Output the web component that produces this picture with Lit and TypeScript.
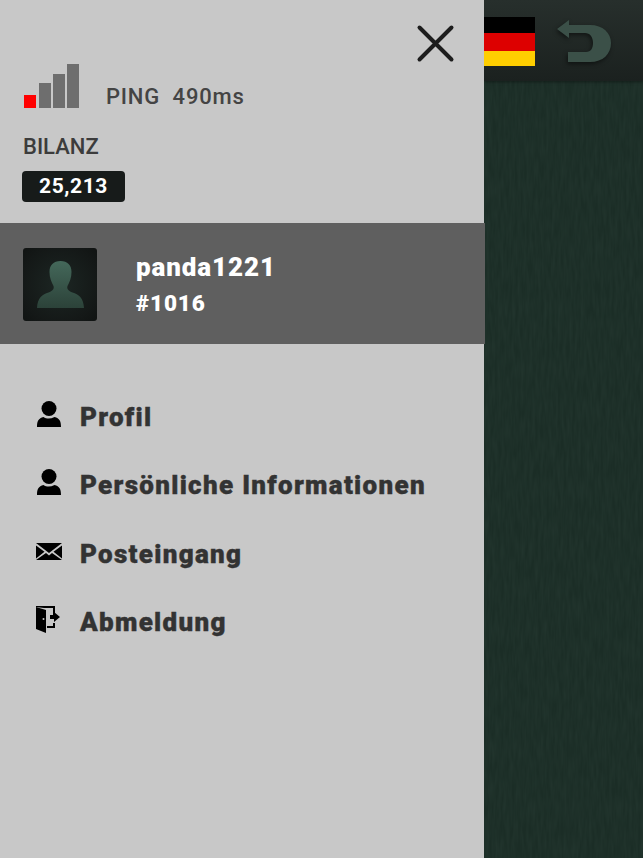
import { LitElement, html, css, svg } from 'lit';
import { customElement } from 'lit/decorators.js';

const personIcon = svg`<svg class="ico" width="27" height="28" viewBox="0 0 27 28"><circle cx="14" cy="8.5" r="7.5" fill="#000"/><path d="M2 27c0-6 1.500-8.500 6.500-10 3 2 7 2 11 0 5 1.500 6.500 4 6.500 10z" fill="#000"/></svg>`;
const mailIcon = svg`<svg class="ico" width="28" height="20" viewBox="0 0 28 20"><path d="M1 2h26L14 12z M1 4.500v13l8.500-6.800z M27 4.500v13l-8.500-6.800z M1 19l10-7 3 2.500 3-2.500 10 7z" fill="#000"/></svg>`;
const doorIcon = svg`<svg class="ico" width="26" height="28" viewBox="0 0 26 28"><path d="M1 1h19v11h-2V3H9L1 2z" fill="#000"/><path d="M1 2l10 3v23L1 24z" fill="#000"/><path d="M12 23h8v-5h-2v3h-6z" fill="#000"/><path d="M15 10h4V7l6 5-6 5v-3h-4z" fill="#000"/><circle cx="8.500" cy="14" r="1" fill="#c8c8c8"/></svg>`;

const menu = [
  { icon: personIcon, label: 'Profil' },
  { icon: personIcon, label: 'Persönliche Informationen' },
  { icon: mailIcon, label: 'Posteingang' },
  { icon: doorIcon, label: 'Abmeldung' },
];

const bars = [13, 25, 34, 44];

@customElement('app-root')
export class AppRoot extends LitElement {
  static styles = css`
    :host {
      display: block;
      width: 643px;
      height: 858px;
      overflow: hidden;
      font-family: Roboto, "Liberation Sans", sans-serif;
    }
    .page {
      display: flex;
      width: 100%;
      height: 100%;
    }
    .drawer {
      flex: 0 0 484px;
      min-width: 0;
      background: #c8c8c8;
      display: flex;
      flex-direction: column;
      position: relative;
      z-index: 1;
    }
    .close {
      position: absolute;
      left: 416px;
      top: 24px;
      filter: blur(0.5px);
    }
    .status {
      height: 223px;
      padding: 64px 0 0 23px;
      box-sizing: border-box;
    }
    .ping {
      display: flex;
      align-items: flex-end;
      height: 44px;
    }
    .bars {
      display: flex;
      align-items: flex-end;
      gap: 2px;
      width: 56px;
      height: 44px;
      margin-left: 1px;
    }
    .bars span {
      width: 12px;
      background: #6e6e6e;
    }
    .bars span:first-child {
      background: #f00;
      margin-right: 1px;
    }
    .ping-text {
      margin: 0 0 -1px 26px;
      font: 500 22px/24px Roboto, sans-serif;
      letter-spacing: 0.8px;
      color: #444;
      white-space: pre;
    }
    .bilanz {
      margin-top: 27px;
      font: 500 22px/24px Roboto, sans-serif;
      color: #3c3c3c;
    }
    .balance {
      margin-top: 12px;
      margin-left: -1px;
      width: 103px;
      height: 31px;
      border-radius: 4px;
      background: #171b1a;
      color: #fff;
      font: 700 21px/31px Roboto, sans-serif;
      letter-spacing: 0.6px;
      text-align: center;
    }
    .user {
      height: 121px;
      background: #5f5f5f;
      display: flex;
      align-items: center;
      padding-left: 23px;
      width: 485px;
      box-sizing: border-box;
    }
    .avatar {
      width: 74px;
      height: 73px;
      margin-top: 1px;
      border-radius: 3px;
      background: radial-gradient(circle at 50% 50%, #1c2623 0%, #141817 75%, #101312 100%);
      display: flex;
      align-items: flex-end;
      justify-content: center;
      padding-bottom: 13px;
      box-sizing: border-box;
      flex: none;
    }
    .who {
      margin-left: 39px;
      color: #fff;
      font-weight: 900;
      letter-spacing: 0.9px;
    }
    .name {
      font-size: 26px;
      line-height: 30px;
      margin-top: 1px;
    }
    .tag {
      margin-top: 8px;
      font-size: 22.5px;
      line-height: 26px;
    }
    .menu {
      display: flex;
      flex-direction: column;
      padding: 39px 0 0 35px;
    }
    .row {
      display: flex;
      align-items: center;
      height: 68.3px;
      color: #333;
      font-size: 26px;
      font-weight: 900;
      letter-spacing: 1.3px;
      -webkit-text-stroke: 0.4px #333;
    }
    .ico-box {
      width: 45px;
      flex: none;
      display: flex;
      margin-top: -6px;
    }
    .side {
      flex: 1;
      position: relative;
      background: #1b2d26;
    }
    .noise {
      position: absolute;
      inset: 0;
      width: 100%;
      height: 100%;
      opacity: 0.09;
    }
    .bar {
      position: relative;
      height: 81px;
      background: linear-gradient(#272f2c, #1b211f);
      display: flex;
      align-items: flex-start;
      box-shadow: 0 1px 3px rgba(0,0,0,.4);
    }
    .flag {
      width: 51px;
      height: 49px;
      margin-top: 17px;
      background: linear-gradient(#000 0 16px, #d00 16px 34px, #ffce00 34px);
    }
    .back {
      margin: 17px 0 0 19px;
      filter: drop-shadow(-1px 2px 2px rgba(0,0,0,.5));
    }
  `;

  render() {
    return html`
      <div class="page">
        <div class="drawer">
          <svg class="close" width="40" height="40" viewBox="0 0 40 40">
            <path d="M3.500 3.500 L35.500 35.500 M35.500 3.500 L3.500 35.500" stroke="#1d1d1d" stroke-width="4" stroke-linecap="round"/>
          </svg>
          <div class="status">
            <div class="ping">
              <div class="bars">
                ${bars.map(h => html`<span style="height:${h}px"></span>`)}
              </div>
              <div class="ping-text">PING  490ms</div>
            </div>
            <div class="bilanz">BILANZ</div>
            <div class="balance">25,213</div>
          </div>
          <div class="user">
            <div class="avatar">
              <svg width="47" height="47" viewBox="0 0 47 47">
                <defs>
                  <linearGradient id="sil" x1="0" y1="0" x2="0" y2="1">
                    <stop offset="0" stop-color="#44685a"/>
                    <stop offset="1" stop-color="#2c4239"/>
                  </linearGradient>
                </defs>
                <path d="M23.500 0c7 0 11 4 11 11 0 6-2 10-4 14-1 3 1 5 5 6.500 6 2 11 5 11.500 15.500H0c.5-10.500 5.500-13.500 11.500-15.500 4-1.500 6-3.500 5-6.500-2-4-4-8-4-14C12.500 4 16.500 0 23.500 0z" fill="url(#sil)"/>
              </svg>
            </div>
            <div class="who">
              <div class="name">panda1221</div>
              <div class="tag">#1016</div>
            </div>
          </div>
          <div class="menu">
            ${menu.map(m => html`
              <div class="row"><div class="ico-box">${m.icon}</div>${m.label}</div>
            `)}
          </div>
        </div>
        <div class="side">
          <svg class="noise">
            <filter id="grain">
              <feTurbulence type="fractalNoise" baseFrequency="0.35 0.05" numOctaves="2" seed="4"/>
              <feColorMatrix values="0 0 0 0 0.3  0 0 0 0 0.45  0 0 0 0 0.38  0 0 0 0.9 -0.2"/>
            </filter>
            <rect width="100%" height="100%" filter="url(#grain)"/>
          </svg>
          <div class="bar">
            <div class="flag"></div>
            <svg class="back" width="58" height="48" viewBox="0 0 58 48">
              <path d="M3 12 L15 3 V8 H36 C49 8 57 16 57 26 C57 37 49 45 36 45 H14 V35 H32 C37 35 39 31 39 26 C39 20 36 16 31 16 H15 V21z" fill="#3b5048"/>
            </svg>
          </div>
        </div>
      </div>
    `;
  }
}
